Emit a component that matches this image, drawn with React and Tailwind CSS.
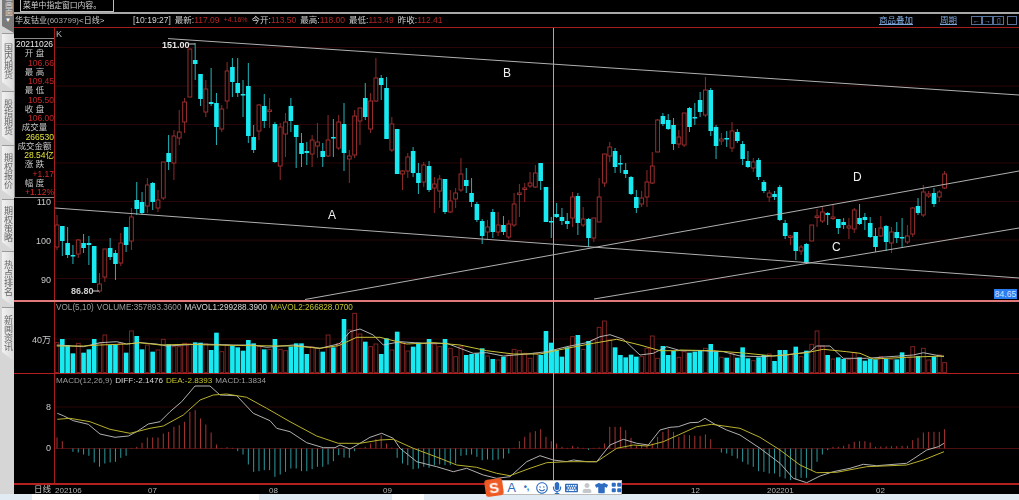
import { FaMicrophone, FaTshirt, FaKeyboard, FaUser, FaRegSmile } from 'react-icons/fa'
import { BsGridFill } from 'react-icons/bs'

const FONT = "font-['Liberation_Sans','Noto_Sans_CJK_SC',sans-serif]"

// [red?, wickTop, bodyTop, bodyBottom, wickBottom] in page pixels
const candles = [
  [1,215,225,247,250],[0,226,226,241,256],[0,227,243,255,258],[0,245,255,256,264],[1,239,240,254,258],[0,234,243,248,253],
  [0,236,243,245,265],[0,246,246,283,283],[1,273,284,291,293],[1,249,249,277,282],[0,238,248,257,260],[0,250,253,264,280],
  [1,233,243,263,266],[0,227,227,245,252],[1,208,217,241,250],[0,182,200,209,215],[0,192,202,213,215],[1,178,185,206,213],
  [0,182,183,202,210],[1,190,200,208,212],[1,162,162,198,200],[0,135,153,162,170],[1,130,136,163,180],[1,110,132,138,145],
  [1,98,102,122,133],[1,49,49,97,97],[0,43,60,64,80],[0,74,74,99,106],[1,80,89,112,117],[0,68,102,104,106],
  [0,93,103,127,145],[1,105,109,129,132],[1,62,71,101,109],[0,58,67,82,97],[0,58,83,93,97],[0,80,94,95,117],
  [0,63,86,136,143],[0,125,137,150,153],[1,104,105,131,140],[0,94,106,121,128],[1,98,110,111,128],[0,122,124,162,163],
  [1,123,127,166,180],[1,113,122,134,157],[0,98,106,121,132],[0,125,125,137,168],[0,133,143,154,167],[0,142,151,153,165],
  [1,135,140,154,167],[1,123,142,146,158],[0,143,151,157,167],[1,115,140,156,157],[0,119,137,138,157],[1,115,122,148,150],
  [0,103,124,153,171],[1,150,156,159,183],[1,110,116,155,158],[1,108,108,121,145],[0,83,98,117,120],[1,93,101,129,133],
  [1,58,78,101,102],[0,75,78,85,100],[0,77,88,139,139],[1,117,124,150,152],[0,129,129,174,174],[1,170,171,174,190],
  [1,153,157,171,178],[0,147,151,173,177],[0,163,173,183,194],[1,162,165,182,187],[0,161,166,190,192],[1,177,184,188,213],
  [1,175,179,191,208],[0,179,179,212,214],[1,190,201,212,213],[1,188,193,199,208],[1,158,174,190,192],[0,168,180,186,193],
  [0,178,193,202,207],[0,202,204,220,222],[0,219,221,236,244],[1,220,227,232,240],[0,209,212,232,238],[1,212,225,232,236],
  [0,216,225,232,235],[1,220,224,237,239],[1,193,204,225,227],[1,184,193,194,217],[1,183,188,189,202],[1,172,183,186,188],
  [1,165,173,187,188],[0,163,163,181,190],[0,187,187,222,222],[0,217,221,222,238],[0,203,214,217,218],[0,208,217,221,225],
  [0,213,221,224,229],[1,192,197,218,227],[0,193,196,223,235],[1,207,219,225,227],[0,218,219,238,247],[1,218,218,238,242],
  [1,178,197,222,222],[1,154,154,183,187],[1,142,147,156,162],[0,148,151,167,173],[0,155,163,164,173],[0,163,170,174,178],
  [0,176,177,194,195],[0,190,197,208,213],[1,191,198,204,207],[1,170,182,197,207],[1,152,166,183,184],[1,119,120,152,152],
  [0,113,116,124,126],[0,114,120,129,130],[0,118,125,144,150],[1,130,137,144,148],[1,113,113,145,147],[0,107,108,127,132],
  [0,103,117,118,125],[0,92,100,112,117],[1,77,90,115,117],[0,88,90,131,136],[0,125,127,146,159],[1,133,139,141,145],
  [0,131,138,139,147],[1,122,131,148,152],[0,129,132,141,143],[0,141,144,159,165],[0,151,161,167,168],[1,158,162,168,172],
  [0,158,160,177,180],[0,180,182,191,193],[1,190,193,197,202],[0,191,194,197,200],[0,185,187,220,221],[0,220,223,236,239],
  [1,235,236,237,245],[0,232,232,251,260],[1,245,247,251,255],[0,243,244,263,264],[1,225,225,241,241],[1,209,216,217,227],
  [1,207,212,221,223],[0,212,213,215,225],[1,204,217,218,220],[0,219,219,228,234],[0,218,222,225,229],[1,218,226,228,239],
  [1,208,210,229,233],[0,204,218,224,225],[0,213,217,220,230],[0,217,223,237,238],[0,228,236,247,252],[1,216,228,236,237],
  [0,225,226,242,251],[1,227,232,243,253],[0,222,232,238,243],[0,218,237,238,248],[1,225,236,242,244],[1,207,208,234,237],
  [0,198,206,213,215],[1,185,192,215,217],[1,191,194,196,198],[0,188,193,204,207],[1,190,192,197,202],[1,171,174,188,189],
]

// volume bar tops and MACD bars, read off the 3x crops (y = 330 + n/3)
const volTops = [
  38,27,45,70,40,68,58,27,40,15,45,45,40,68,3,18,58,45,65,60,28,43,50,50,40,42,37,38,42,60,8,65,45,47,52,62,30,40,50,58,58,27,58,62,50,40,40,72,50,55,65,15,52,40,
  -33,0,-50,12,35,50,42,72,25,60,5,40,63,50,38,40,27,42,50,27,55,80,50,75,72,70,55,78,87,90,80,75,58,62,70,85,70,75,3,38,60,80,52,20,15,58,33,30,-8,-27,30,52,75,82,74,80,80,55,18,85,48,75,63,82,
  65,68,65,60,55,42,65,82,83,70,83,52,85,92,82,75,72,93,60,60,73,50,80,62,43,3,48,75,87,82,87,88,68,82,92,87,88,80,87,88,88,67,82,50,78,55,90,80,75,98,
]

const macdBars = [
  33,22,0,-10,-12,-18,-22,-42,-55,-45,-42,-40,-28,-22,2,5,17,33,33,33,45,50,65,70,80,110,115,90,72,48,12,2,4,2,-8,-18,-48,-70,-68,-65,-65,-85,-78,-70,-60,-60,-68,-68,-62,-55,-55,-48,-38,-20,
  -27,-28,-8,2,5,15,28,40,15,3,-28,-45,-50,-62,-60,-55,-58,-50,-48,-50,-50,-45,-22,-20,-18,-25,-35,-33,-35,-33,-30,-15,2,22,35,48,52,58,35,22,15,5,2,8,5,2,-4,2,3,15,65,65,65,55,32,8,10,12,15,35,50,58,50,35,
  42,40,38,38,42,28,0,-12,-15,-22,-30,-40,-48,-55,-68,-70,-75,-75,-85,-90,-95,-93,-88,-88,-65,-40,-18,-5,5,5,8,13,20,22,22,18,5,6,6,7,7,8,8,25,32,48,50,50,50,58,
]

const xAt = (i) => 57 + i * 5.315

// crop points [zx, zy] -> page coords, crops start at x = 0, 340, 680 and y = 330
const trace = (...segments) =>
  segments
    .flatMap(([ox, pts]) => pts.map(([x, y]) => `${(ox + x / 3).toFixed(1)},${(330 + y / 3).toFixed(1)}`))
    .join(' ')

const volWhite = trace(
  [0, [[170,45],[250,50],[300,38],[350,35],[380,42],[420,38],[470,42],[500,48],[600,42],[700,45],[760,45],[800,52],[880,45],[960,55],[1015,42]]],
  [340, [[0,40],[30,5],[60,-3],[100,15],[130,45],[180,35],[250,40],[320,40],[360,55],[400,70],[440,68],[490,78],[560,72],[620,65],[680,50],[740,38],[780,20],[810,14],[850,28],[900,75],[940,70],[980,50],[1015,60]]],
  [680, [[0,62],[60,62],[130,65],[180,78],[250,80],[320,75],[390,65],[410,48],[450,48],[490,85],[560,85],[700,75],[730,68],[792,80]]],
)
const volYellow = trace(
  [0, [[170,48],[250,48],[300,45],[380,42],[420,38],[480,45],[560,43],[640,45],[760,47],[880,48],[960,55],[1015,47]]],
  [340, [[0,45],[50,22],[120,22],[200,42],[280,38],[360,45],[440,62],[520,72],[600,72],[680,55],[760,40],[830,28],[900,45],[960,62],[1015,62]]],
  [680, [[0,60],[100,62],[200,70],[280,78],[380,68],[430,58],[500,65],[540,70],[580,87],[680,82],[792,78]]],
)
const diffLine = trace(
  [0, [[172,250],[190,257],[220,272],[265,283],[300,312],[345,322],[385,318],[410,305],[445,282],[480,275],[510,245],[545,215],[585,168],[630,168],[660,195],[710,197],[760,250],[810,272],[830,295],[870,305],[920,338],[970,353],[1005,353]]],
  [340, [[0,345],[30,357],[60,340],[90,322],[125,310],[160,325],[180,355],[230,395],[290,410],[340,425],[380,415],[430,435],[470,445],[510,440],[560,395],[600,377],[640,390],[680,395],[700,390],[740,395],[770,395],[810,345],[850,328],[890,340],[925,345],[960,300],[990,292],[1015,290]]],
  [680, [[30,278],[55,277],[75,265],[105,283],[140,300],[180,315],[240,355],[300,400],[340,445],[380,458],[420,438],[460,425],[510,415],[550,403],[590,407],[680,400],[740,360],[775,350],[792,340]]],
)
const deaLine = trace(
  [0, [[172,268],[210,265],[270,275],[330,298],[390,310],[450,295],[490,288],[550,255],[600,210],[640,195],[680,192],[740,202],[800,235],[870,275],[950,318],[1015,340]]],
  [340, [[60,340],[120,330],[160,328],[220,355],[300,385],[350,405],[410,412],[470,430],[510,437],[570,415],[620,398],[680,395],[770,395],[830,355],[880,345],[920,348],[970,335],[1015,315]]],
  [680, [[50,290],[95,283],[180,295],[240,322],[300,360],[360,405],[410,428],[470,427],[560,410],[680,405],[730,390],[792,365]]],
)

const infoRows = [
  ['20211026', 'text-[#e8e8e8] text-center'],
  ['开 盘', 'text-[#c8c8c8] text-center'],
  ['106.66', 'text-[#c22424] text-right'],
  ['最 高', 'text-[#c8c8c8] text-center'],
  ['109.45', 'text-[#c22424] text-right'],
  ['最 低', 'text-[#c8c8c8] text-center'],
  ['105.50', 'text-[#c22424] text-right'],
  ['收 盘', 'text-[#c8c8c8] text-center'],
  ['106.00', 'text-[#c22424] text-right'],
  ['成交量', 'text-[#c8c8c8] text-center'],
  ['266530', 'text-[#e4e43c] text-right'],
  ['成交金额', 'text-[#c8c8c8] text-center'],
  ['28.54亿', 'text-[#e4e43c] text-right'],
  ['涨 跌', 'text-[#c8c8c8] text-center'],
  ['+1.17', 'text-[#d42a2a] text-right'],
  ['幅 度', 'text-[#c8c8c8] text-center'],
  ['+1.12%', 'text-[#d42a2a] text-right'],
]

const sideTabs = [
  { label: '国内期货', h: 'h-[58px]' },
  { label: '股指期货', h: 'h-[54px]' },
  { label: '期权报价', h: 'h-[54px]' },
  { label: '期权策略', h: 'h-[52px]' },
  { label: '热点排名', h: 'h-[56px]' },
  { label: '新闻资讯', h: 'h-[54px]' },
]

function Sidebar() {
  return (
    <div className="flex w-[14px] shrink-0 flex-col items-end bg-[#d6d6d6]">
      <div className="flex h-[33px] w-[12px] shrink-0 flex-col items-center bg-[#7a7a7a] text-[8px] leading-[9px] text-[#ddd] [clip-path:polygon(0_0,100%_0,100%_100%,0_calc(100%-7px))]">
        <span className="[writing-mode:vertical-rl]">画面</span>
        <span className="text-[6px] text-white">▼</span>
      </div>
      {sideTabs.map(({ label, h }) => (
        <div
          key={label}
          className={`${h} flex w-[12px] shrink-0 items-center justify-center overflow-hidden border-t border-[#999] bg-gradient-to-r from-[#f2f2f2] to-[#d8d8d8] pb-[4px] text-[9px] leading-[12px] text-[#666] [clip-path:polygon(0_0,100%_0,100%_100%,0_calc(100%-9px))]`}
        >
          <span className="whitespace-nowrap [writing-mode:vertical-rl]">{label}</span>
        </div>
      ))}
    </div>
  )
}

function Quote({ label, value }) {
  return (
    <span>
      <span className="text-[#d0d0d0]">{label}:</span>
      <span className="text-[#b32424]">{value}</span>
    </span>
  )
}

function TitleBar() {
  return (
    <div className="flex h-[14px] shrink-0 items-center border-b border-[#a51e1e] pl-[1px] text-[8.5px] text-[#d0d0d0]">
      <span className="w-[118px] shrink-0 whitespace-nowrap text-[8px]">
        华友钴业<span className="text-[#a8a8a8]">(603799)</span>&lt;日线&gt;
      </span>
      <span className="flex items-center gap-[4px] whitespace-nowrap">
        <span>[10:19:27]</span>
        <Quote label="最新" value="117.09" />
        <span className="text-[7px] text-[#b32424]">+4.16%</span>
        <Quote label="今开" value="113.50" />
        <Quote label="最高" value="118.00" />
        <Quote label="最低" value="113.49" />
        <Quote label="昨收" value="112.41" />
      </span>
      <span className="ml-auto flex items-center text-[#7fa8dc]">
        <span className="underline">商品叠加</span>
        <span className="ml-[27px] underline">周期</span>
        <span className="ml-[14px] flex">
          {['←', '→', '▯'].map((glyph) => (
            <span key={glyph} className="flex h-[9px] w-[11px] items-center justify-center border border-[#54729c] text-[7px] leading-none text-[#7fa8dc]">
              {glyph}
            </span>
          ))}
        </span>
        <span className="ml-[3px] mr-[2px] h-[9px] w-[10px] border border-[#54729c]" />
      </span>
    </div>
  )
}

function GridLines({ rows }) {
  return rows.map((y) => <line key={y} x1="55" x2="1019" y1={y} y2={y} stroke="#2a0606" />)
}

function PricePanel() {
  return (
    <div className="relative flex h-[274px] shrink-0 border-b-2 border-[#e07a7a]">
      <div className="relative w-[41px] shrink-0 border-r border-[#a51e1e]">
        <div className="absolute inset-x-0 top-[10px] h-[160px] overflow-hidden border border-r-0 border-[#8a8a8a] pt-[1px] text-[8.5px] leading-[9.25px]">
          {infoRows.map(([text, cls]) => (
            <div key={text} className={`${cls} whitespace-nowrap`}>{text}</div>
          ))}
        </div>
        <span className="absolute right-[3px] top-[168px] text-[9px] text-[#c8c8c8]">110</span>
        <span className="absolute right-[3px] top-[207px] text-[9px] text-[#c8c8c8]">100</span>
        <span className="absolute right-[3px] top-[246px] text-[9px] text-[#c8c8c8]">90</span>
      </div>
      <svg viewBox="55 28 964 272" className="h-[272px] w-[964px] shrink-0">
        <GridLines rows={[47.5, 86, 124.5, 163, 201.5, 240, 278.5]} />
        {candles.map(([red, wt, bt, bb, wb], i) => {
          const x = xAt(i)
          const height = Math.max(bb - bt, 1.5)
          return (
            <g key={i}>
              <line x1={x} x2={x} y1={wt} y2={wb} stroke={red ? '#8f2a2a' : '#22b4ba'} />
              {red ? (
                <rect x={x - 1.9} y={bt} width="3.8" height={height} fill="#000" stroke="#9a2e2e" />
              ) : (
                <rect x={x - 2.3} y={bt} width="4.6" height={height} fill="#18eaf2" />
              )}
            </g>
          )
        })}
        <g stroke="#b0b0b0">
          <line x1="168" y1="38.6" x2="1019" y2="95" />
          <line x1="55" y1="208" x2="1019" y2="278" />
          <line x1="305" y1="299.5" x2="1019" y2="171" />
          <line x1="594" y1="299" x2="1019" y2="228" />
        </g>
        <line x1="189" x2="195" y1="44" y2="44" stroke="#ccc" />
        <line x1="92" x2="99" y1="291" y2="291" stroke="#ccc" />
        <g className={FONT}>
          <text x="162" y="47.5" fontSize="9" fontWeight="700" fill="#e8e8e8">151.00</text>
          <text x="71" y="294" fontSize="9" fontWeight="700" fill="#d0d0d0">86.80</text>
          <text x="56" y="37" fontSize="9" fill="#b8b8b8">K</text>
          <text x="328" y="219" fontSize="12" fill="#f0f0f0">A</text>
          <text x="503" y="77" fontSize="12" fill="#f0f0f0">B</text>
          <text x="832" y="251" fontSize="12" fill="#f0f0f0">C</text>
          <text x="853" y="181" fontSize="12" fill="#f0f0f0">D</text>
        </g>
      </svg>
      <span className="absolute bottom-[1px] right-[2px] flex h-[10px] w-[23px] items-center justify-center bg-[#2b7cf0] text-[8.5px] text-[#cfe2ff]">84.65</span>
    </div>
  )
}

function VolumePanel() {
  return (
    <div className="relative flex h-[72px] shrink-0 border-b border-[#b42020]">
      <div className="relative w-[41px] shrink-0 border-r border-[#a51e1e]">
        <span className="absolute right-[3px] top-[32px] text-[9px] text-[#c8c8c8]">40万</span>
      </div>
      <svg viewBox="55 302 964 71" className="h-[71px] w-[964px] shrink-0">
        <GridLines rows={[339]} />
        {volTops.map((top, i) => {
          const y = 330 + top / 3
          const x = xAt(i)
          return candles[i][0] ? (
            <rect key={i} x={x - 1.9} y={y} width="3.8" height={372.5 - y} fill="#000" stroke="#7c2222" />
          ) : (
            <rect key={i} x={x - 2.3} y={y} width="4.6" height={373 - y} fill="#18eaf2" />
          )
        })}
        <polyline points={volWhite} fill="none" stroke="#c4c4c4" strokeWidth="0.9" />
        <polyline points={volYellow} fill="none" stroke="#c9c235" strokeWidth="1" />
      </svg>
      <div className="absolute left-[42px] top-[0px] flex gap-[3px] whitespace-nowrap text-[8.2px] leading-[11px]">
        <span className="text-[#9c9c9c]">VOL(5,10)</span>
        <span className="text-[#9c9c9c]">VOLUME:357893.3600</span>
        <span className="text-[#d8d8d8]">MAVOL1:299288.3900</span>
        <span className="text-[#c4c42c]">MAVOL2:266828.0700</span>
      </div>
    </div>
  )
}

function MacdPanel() {
  return (
    <div className="relative flex h-[111px] shrink-0 border-b-2 border-[#b42020]">
      <div className="relative w-[41px] shrink-0 border-r border-[#a51e1e]">
        <span className="absolute right-[3px] top-[27px] text-[9px] text-[#c8c8c8]">8</span>
        <span className="absolute right-[3px] top-[68px] text-[9px] text-[#c8c8c8]">0</span>
      </div>
      <svg viewBox="55 374 964 109" className="h-[109px] w-[964px] shrink-0">
        <GridLines rows={[407]} />
        <line x1="55" x2="1019" y1="448.5" y2="448.5" stroke="#4c1010" />
        {macdBars.map((v, i) =>
          v === 0 ? null : (
            <line key={i} x1={xAt(i)} x2={xAt(i)} y1="448.5" y2={448.5 - v / 3} stroke={v > 0 ? '#a83434' : '#2c9a9e'} />
          ),
        )}
        <polyline points={diffLine} fill="none" stroke="#b0b0b0" />
        <polyline points={deaLine} fill="none" stroke="#b8b02c" />
      </svg>
      <div className="absolute left-[42px] top-[1px] flex gap-[3px] whitespace-nowrap text-[8.1px] leading-[11px]">
        <span className="text-[#9c9c9c]">MACD(12,26,9)</span>
        <span className="text-[#d8d8d8]">DIFF:-2.1476</span>
        <span className="text-[#c4c42c]">DEA:-2.8393</span>
        <span className="text-[#9c9c9c]">MACD:1.3834</span>
      </div>
    </div>
  )
}

function AxisBar() {
  const ticks = [
    [55, '202106'], [148, '07'], [269, '08'], [383, '09'], [691, '12'], [767, '202201'], [876, '02'],
  ]
  return (
    <div className="flex h-[9px] shrink-0 items-center">
      <span className="w-[37px] shrink-0 text-right text-[8.5px] leading-none text-[#c8c8c8]">日线</span>
      <svg viewBox="51 485 968 9" className={`h-[9px] w-[968px] shrink-0 ${FONT}`}>
        {ticks.map(([x, label]) => (
          <text key={label} x={x} y="492.5" fontSize="8" fill="#b4b4b4">{label}</text>
        ))}
      </svg>
    </div>
  )
}

const toolItems = [
  <span className="text-[13px] leading-none">A</span>,
  <span className="text-[9px] font-bold leading-none">•,</span>,
  <FaRegSmile className="h-[12px] w-[12px]" />,
  <FaMicrophone className="h-[12px] w-[10px]" />,
  <FaKeyboard className="h-[12px] w-[13px]" />,
  <FaUser className="h-[10px] w-[10px] text-[#c4c8cc]" />,
  <FaTshirt className="h-[12px] w-[13px]" />,
  <BsGridFill className="h-[11px] w-[11px]" />,
]

function Toolbar() {
  return (
    <div className="absolute left-[487px] top-[480px] flex h-[15px] w-[135px] items-center border border-[#bbb] bg-white">
      <span className="absolute left-[-3px] top-[-2px] flex h-[17px] w-[18px] rotate-[-8deg] items-center justify-center rounded-[3px] bg-[#ee5a24] text-[15px] font-bold leading-none text-white">S</span>
      <div className="ml-[16px] flex items-center text-[#2d6cc0]">
        {toolItems.map((item, i) => (
          <span key={i} className="flex w-[15px] justify-center">{item}</span>
        ))}
      </div>
    </div>
  )
}

export default function App() {
  return (
    <div className={`relative flex h-[500px] w-[1019px] flex-col overflow-hidden bg-black ${FONT}`}>
      <div className="flex h-[494px] shrink-0 blur-[0.35px]">
        <Sidebar />
        <div className="flex min-w-0 flex-1 flex-col">
          <div className="h-[14px] shrink-0 border-b-2 border-[#a8a8a8] pl-[6px]">
            <div className="h-[12px] w-[94px] border-x border-b border-[#bdbdbd] pl-[2px] text-[7.8px] leading-[11px] text-[#d4d4d4]">
              菜单中指定窗口内容。
            </div>
          </div>
          <TitleBar />
          <PricePanel />
          <VolumePanel />
          <MacdPanel />
          <AxisBar />
        </div>
      </div>
      <div className="flex h-[6px] shrink-0 bg-[#e0ebf4]">
        <div className="ml-[32px] w-[227px] bg-white" />
        <div className="ml-[133px] w-[32px] bg-white" />
      </div>
      <div className="absolute left-[553px] top-[28px] h-[452px] w-px bg-[#a8a8a8]" />
      <Toolbar />
    </div>
  )
}
